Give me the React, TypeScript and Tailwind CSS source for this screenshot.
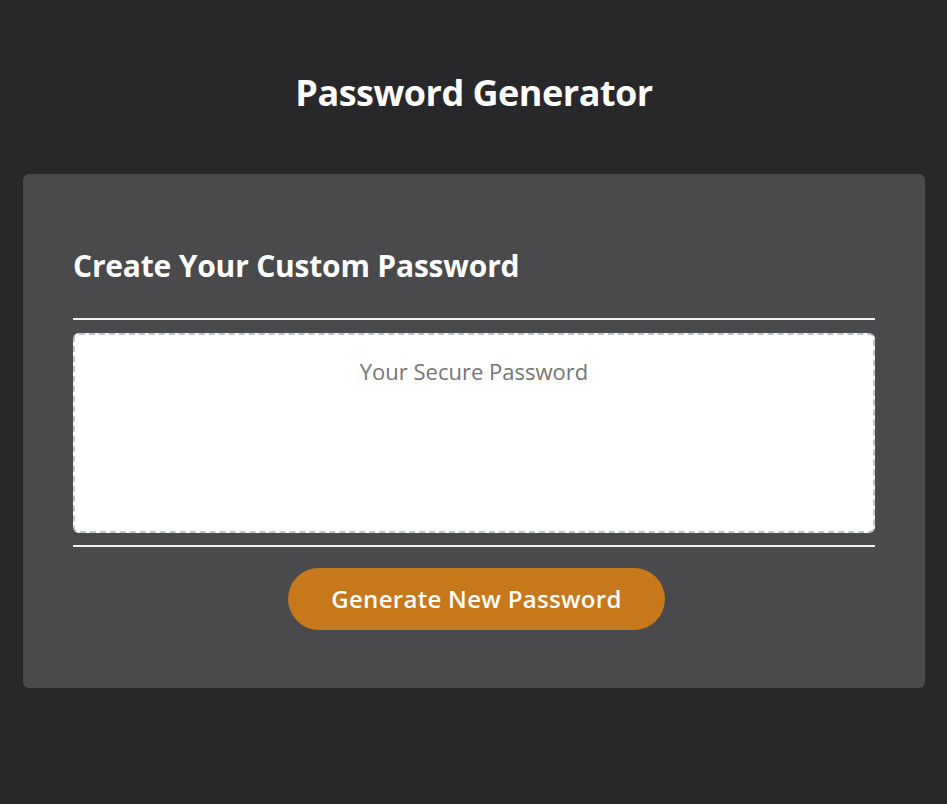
export default function App() {
  return (
    <div
      className="min-h-[804px] bg-[#28282b] pl-[23px] pr-[22px] pt-[68px] pb-[116px]"
      style={{ fontFamily: '"Open Sans", "Noto Sans", sans-serif' }}
    >
      <header className="text-center">
        <h1 className="text-[36px] leading-[50px] font-bold text-white tracking-[-0.5px]">
          Password Generator
        </h1>
      </header>

      <main className="mt-[56px] rounded-md bg-[#4a4a4d] px-[50px] pt-[72px] pb-[58px]">
        <h2 className="text-[30px] leading-[40px] font-bold text-white tracking-[-0.2px]">
          Create Your Custom Password
        </h2>

        <hr className="mt-[32px] border-0 border-t-2 border-[#f0f0f0]" />

        <textarea
          readOnly
          placeholder="Your Secure Password"
          className="mt-[13px] block h-[200px] w-full resize-none rounded-md border-2 border-dashed border-[#c0c4cc] bg-white px-4 pt-[20px] text-center text-[22px] text-[#555] placeholder:text-[#757575] outline-none"
        />

        <hr className="mt-[12px] border-0 border-t-2 border-[#f0f0f0]" />

        <div className="mt-[21px] flex justify-center">
          <button className="ml-[5px] h-[62px] w-[377px] rounded-full bg-[#c6781a] text-[24px] font-semibold tracking-[0.3px] text-white">
            Generate New Password
          </button>
        </div>
      </main>
    </div>
  );
}
